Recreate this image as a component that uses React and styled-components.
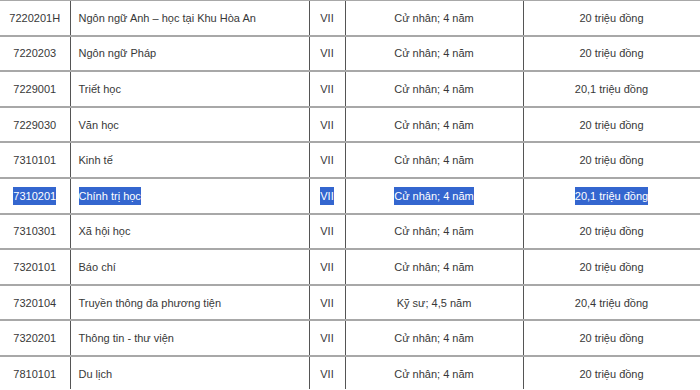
import React from 'react'
import styled, { createGlobalStyle } from 'styled-components'

const GlobalStyle = createGlobalStyle`
  html, body {
    margin: 0;
    padding: 0;
    background: #fff;
    overflow: hidden;
  }
`

const rows = [
  ['7220201H', 'Ngôn ngữ Anh – học tại Khu Hòa An', 'VII', 'Cử nhân; 4 năm', '20 triệu đồng'],
  ['7220203', 'Ngôn ngữ Pháp', 'VII', 'Cử nhân; 4 năm', '20 triệu đồng'],
  ['7229001', 'Triết học', 'VII', 'Cử nhân; 4 năm', '20,1 triệu đồng'],
  ['7229030', 'Văn học', 'VII', 'Cử nhân; 4 năm', '20 triệu đồng'],
  ['7310101', 'Kinh tế', 'VII', 'Cử nhân; 4 năm', '20 triệu đồng'],
  ['7310201', 'Chính trị học', 'VII', 'Cử nhân; 4 năm', '20,1 triệu đồng', true],
  ['7310301', 'Xã hội học', 'VII', 'Cử nhân; 4 năm', '20 triệu đồng'],
  ['7320101', 'Báo chí', 'VII', 'Cử nhân; 4 năm', '20 triệu đồng'],
  ['7320104', 'Truyền thông đa phương tiện', 'VII', 'Kỹ sư; 4,5 năm', '20,4 triệu đồng'],
  ['7320201', 'Thông tin - thư viện', 'VII', 'Cử nhân; 4 năm', '20 triệu đồng'],
  ['7810101', 'Du lịch', 'VII', 'Cử nhân; 4 năm', '20 triệu đồng'],
]

const App = () => {
  return (
    <>
      <GlobalStyle />
      <Page>
        <Table>
          <colgroup>
            <col style={{ width: 70 }} />
            <col style={{ width: 239 }} />
            <col style={{ width: 36 }} />
            <col style={{ width: 178 }} />
            <col style={{ width: 177 }} />
          </colgroup>
          <tbody>
            {rows.map((r) => (
              <Row key={r[0]}>
                <Cell align="center"><Text selected={r[5]}>{r[0]}</Text></Cell>
                <Cell align="left"><Text selected={r[5]}>{r[1]}</Text></Cell>
                <Cell align="center"><Text selected={r[5]}>{r[2]}</Text></Cell>
                <Cell align="center"><Text selected={r[5]}>{r[3]}</Text></Cell>
                <Cell align="center"><Text selected={r[5]}>{r[4]}</Text></Cell>
              </Row>
            ))}
          </tbody>
        </Table>
      </Page>
    </>
  )
}

export default App

const Page = styled.div`
  width: 700px;
  height: 390px;
  overflow: hidden;
  margin-top: -1px;
`

const Table = styled.table`
  width: 700px;
  border-collapse: collapse;
  table-layout: fixed;
  font-family: "Liberation Sans", Arial, sans-serif;
  font-size: 11px;
  color: #383838;
`

const Row = styled.tr`
  height: 35.6px;
`

const Cell = styled.td`
  padding: 0 ${(p) => (p.align === 'left' ? '8px' : '3px')};
  text-align: ${(p) => p.align};
  vertical-align: middle;
  border-top: 2px solid #a8a8a8;
  border-bottom: 2px solid #a8a8a8;
  border-left: 1px solid #555;
  border-right: 1px solid #555;
  white-space: nowrap;

  &:first-child {
    border-left: none;
  }
`

const Text = styled.span`
  background: ${(p) => (p.selected ? '#3466cf' : 'transparent')};
  color: ${(p) => (p.selected ? '#fff' : 'inherit')};
  padding: 3px 0;
`
